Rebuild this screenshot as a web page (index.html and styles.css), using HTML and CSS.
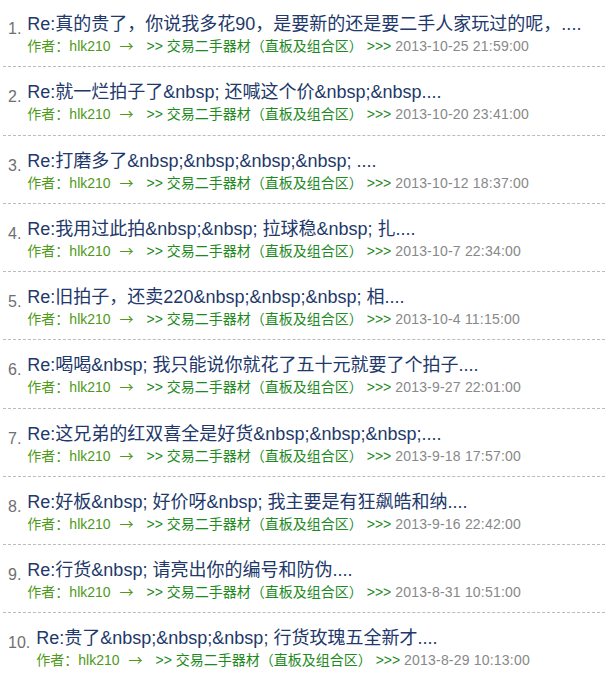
FILE: index.html
```html
<!DOCTYPE html>
<html lang="zh-CN">
<head>
    <meta charset="UTF-8">
    <meta name="viewport" content="width=device-width, initial-scale=1.0">
    <title>回复列表</title>
    <link rel="stylesheet" href="styles.css">
</head>
<body>
    <ol class="replies">
        <li class="reply">
            <span class="num">1.</span>
            <div class="body">
                <a class="title" href="#">Re:真的贵了，你说我多花90，是要新的还是要二手人家玩过的呢，....</a>
                <div class="meta"><span class="author">作者：hlk210</span><span class="arrow">→</span><a class="board" href="#">&gt;&gt; 交易二手器材（直板及组合区）</a> <span class="sep">&gt;&gt;&gt;</span> <span class="time">2013-10-25 21:59:00</span></div>
            </div>
        </li>
        <li class="reply">
            <span class="num">2.</span>
            <div class="body">
                <a class="title" href="#">Re:就一烂拍子了&amp;nbsp; 还喊这个价&amp;nbsp;&amp;nbsp....</a>
                <div class="meta"><span class="author">作者：hlk210</span><span class="arrow">→</span><a class="board" href="#">&gt;&gt; 交易二手器材（直板及组合区）</a> <span class="sep">&gt;&gt;&gt;</span> <span class="time">2013-10-20 23:41:00</span></div>
            </div>
        </li>
        <li class="reply">
            <span class="num">3.</span>
            <div class="body">
                <a class="title" href="#">Re:打磨多了&amp;nbsp;&amp;nbsp;&amp;nbsp;&amp;nbsp; ....</a>
                <div class="meta"><span class="author">作者：hlk210</span><span class="arrow">→</span><a class="board" href="#">&gt;&gt; 交易二手器材（直板及组合区）</a> <span class="sep">&gt;&gt;&gt;</span> <span class="time">2013-10-12 18:37:00</span></div>
            </div>
        </li>
        <li class="reply">
            <span class="num">4.</span>
            <div class="body">
                <a class="title" href="#">Re:我用过此拍&amp;nbsp;&amp;nbsp; 拉球稳&amp;nbsp; 扎....</a>
                <div class="meta"><span class="author">作者：hlk210</span><span class="arrow">→</span><a class="board" href="#">&gt;&gt; 交易二手器材（直板及组合区）</a> <span class="sep">&gt;&gt;&gt;</span> <span class="time">2013-10-7 22:34:00</span></div>
            </div>
        </li>
        <li class="reply">
            <span class="num">5.</span>
            <div class="body">
                <a class="title" href="#">Re:旧拍子，还卖220&amp;nbsp;&amp;nbsp;&amp;nbsp; 相....</a>
                <div class="meta"><span class="author">作者：hlk210</span><span class="arrow">→</span><a class="board" href="#">&gt;&gt; 交易二手器材（直板及组合区）</a> <span class="sep">&gt;&gt;&gt;</span> <span class="time">2013-10-4 11:15:00</span></div>
            </div>
        </li>
        <li class="reply">
            <span class="num">6.</span>
            <div class="body">
                <a class="title" href="#">Re:喝喝&amp;nbsp; 我只能说你就花了五十元就要了个拍子....</a>
                <div class="meta"><span class="author">作者：hlk210</span><span class="arrow">→</span><a class="board" href="#">&gt;&gt; 交易二手器材（直板及组合区）</a> <span class="sep">&gt;&gt;&gt;</span> <span class="time">2013-9-27 22:01:00</span></div>
            </div>
        </li>
        <li class="reply">
            <span class="num">7.</span>
            <div class="body">
                <a class="title" href="#">Re:这兄弟的红双喜全是好货&amp;nbsp;&amp;nbsp;&amp;nbsp;....</a>
                <div class="meta"><span class="author">作者：hlk210</span><span class="arrow">→</span><a class="board" href="#">&gt;&gt; 交易二手器材（直板及组合区）</a> <span class="sep">&gt;&gt;&gt;</span> <span class="time">2013-9-18 17:57:00</span></div>
            </div>
        </li>
        <li class="reply">
            <span class="num">8.</span>
            <div class="body">
                <a class="title" href="#">Re:好板&amp;nbsp; 好价呀&amp;nbsp; 我主要是有狂飙皓和纳....</a>
                <div class="meta"><span class="author">作者：hlk210</span><span class="arrow">→</span><a class="board" href="#">&gt;&gt; 交易二手器材（直板及组合区）</a> <span class="sep">&gt;&gt;&gt;</span> <span class="time">2013-9-16 22:42:00</span></div>
            </div>
        </li>
        <li class="reply">
            <span class="num">9.</span>
            <div class="body">
                <a class="title" href="#">Re:行货&amp;nbsp; 请亮出你的编号和防伪....</a>
                <div class="meta"><span class="author">作者：hlk210</span><span class="arrow">→</span><a class="board" href="#">&gt;&gt; 交易二手器材（直板及组合区）</a> <span class="sep">&gt;&gt;&gt;</span> <span class="time">2013-8-31 10:51:00</span></div>
            </div>
        </li>
        <li class="reply">
            <span class="num">10.</span>
            <div class="body">
                <a class="title" href="#">Re:贵了&amp;nbsp;&amp;nbsp;&amp;nbsp; 行货玫瑰五全新才....</a>
                <div class="meta"><span class="author">作者：hlk210</span><span class="arrow">→</span><a class="board" href="#">&gt;&gt; 交易二手器材（直板及组合区）</a> <span class="sep">&gt;&gt;&gt;</span> <span class="time">2013-8-29 10:13:00</span></div>
            </div>
        </li>
    </ol>
</body>
</html>
```

FILE: styles.css
```css
body {
    margin: 0;
    background: #fff;
    font-family: "Liberation Sans", Arial, "Noto Sans CJK SC", sans-serif;
}
.replies {
    list-style: none;
    margin: -1px 0 0 3px;
    padding: 0;
}
.reply {
    display: flex;
    align-items: flex-start;
    height: 68.25px;
    box-sizing: border-box;
    padding: 14px 0 0 5px;
    border-bottom: 1px dashed #bbb;
}
.reply:last-child {
    border-bottom: none;
}
.num {
    padding-top: 5px;
    margin-right: 6px;
    font-size: 16px;
    line-height: 22px;
    color: #707070;
}
.body {
    display: flex;
    flex-direction: column;
}
.title {
    font-size: 18px;
    line-height: 22px;
    color: #22386a;
    text-decoration: none;
    white-space: nowrap;
}
.meta {
    font-size: 14px;
    line-height: 20px;
    white-space: nowrap;
}
.author {
    color: #4e9a18;
}
.arrow {
    font-family: "Noto Sans CJK SC", sans-serif;
    color: #4e9a18;
    margin: 0 13px 0 9px;
}
.board {
    color: #1d8a1d;
    text-decoration: none;
}
.sep {
    color: #1d8a1d;
}
.time {
    color: #888;
    letter-spacing: 0.2px;
}
```
